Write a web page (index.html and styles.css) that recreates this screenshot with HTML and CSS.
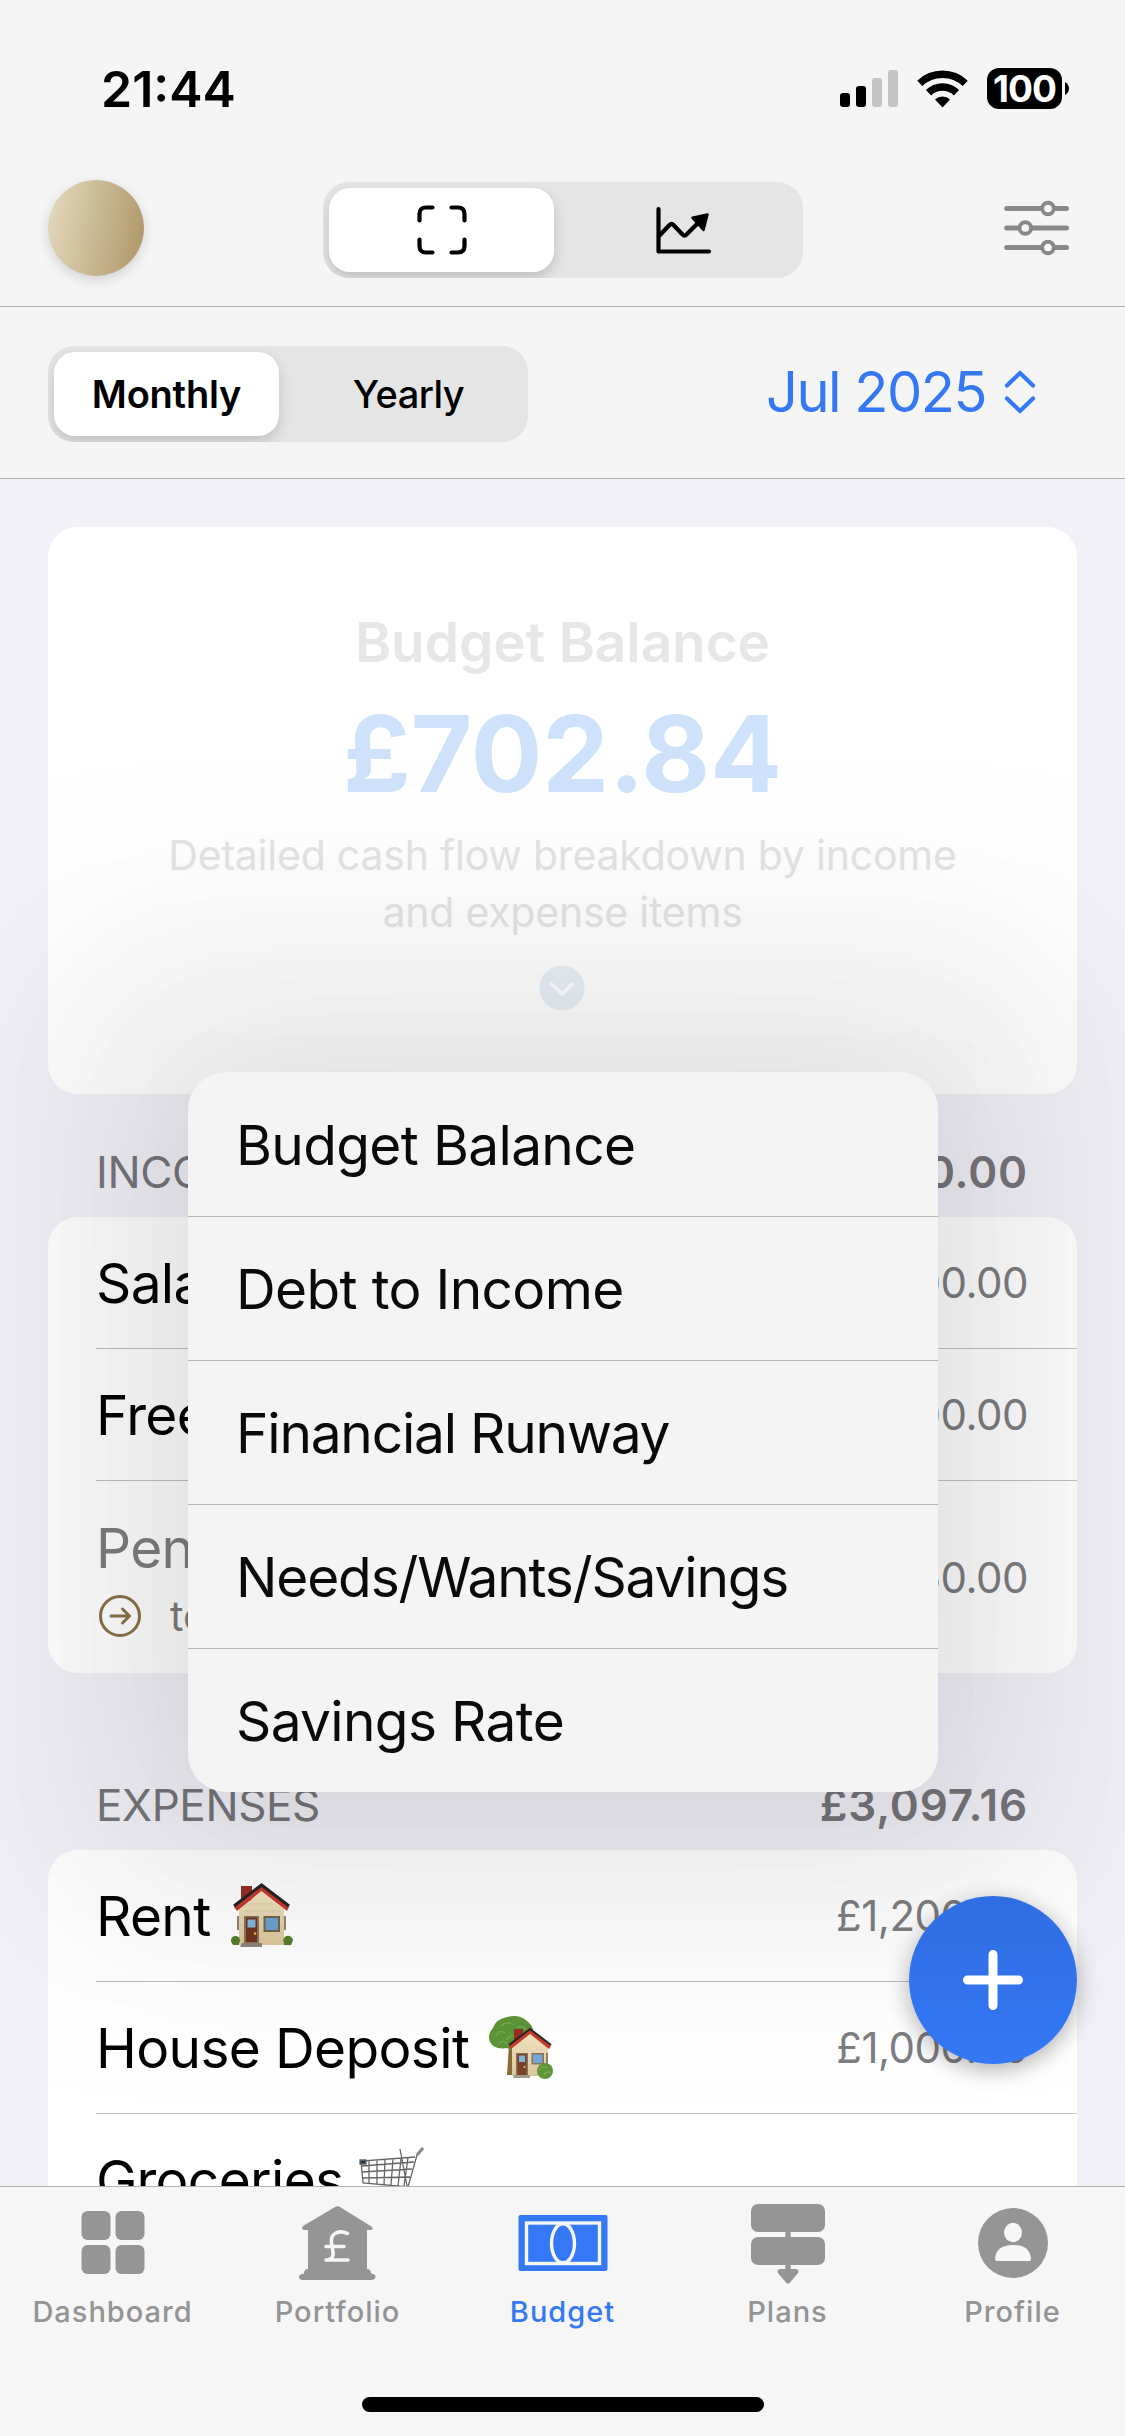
FILE: index.html
```html
<!DOCTYPE html>
<html lang="en">
<head>
<meta charset="utf-8">
<title>Budget</title>
<link rel="stylesheet" href="styles.css">
</head>
<body>
<div class="phone">
  <header class="top">
    <div class="status">
      <span class="clock">21:44</span>
      <div class="status-icons">
        <svg class="signal" width="58" height="38" viewBox="0 0 58 38"><rect x="0" y="23" width="10" height="14" rx="3"/><rect x="16" y="16" width="10" height="21" rx="3"/><g fill="#c4c4c4"><rect x="32" y="8" width="10" height="29" rx="3"/><rect x="48" y="0" width="10" height="37" rx="3"/></g></svg>
        <svg class="wifi" width="51" height="38" viewBox="0 0 51 38"><g fill="none" stroke="#000" stroke-width="7.5"><path d="M2.8 13.4 A33 33 0 0 1 48.200 13.400"/><path d="M11.500 22.800 A20 20 0 0 1 39.500 22.800"/></g><path d="M18 29.500 A11 11 0 0 1 33 29.500 L25.500 37.500 Z"/></svg>
        <div class="battery"><span class="battery-body">100</span><svg width="4" height="13" viewBox="0 0 4 13"><path d="M0 0 Q4 2.500 4 6.500 T0 13Z"/></svg></div>
      </div>
    </div>
    <div class="toolbar">
      <div class="avatar"></div>
      <div class="segment">
        <div class="seg on"><svg width="50" height="50" viewBox="0 0 50 50" fill="none" stroke="#000" stroke-width="4.200" stroke-linecap="round"><path d="M2.500 15.500V9Q2.500 2.500 9 2.500H15.500M34.500 2.500H41Q47.500 2.500 47.500 9V15.500M47.500 34.500V41Q47.500 47.500 41 47.500H34.500M15.500 47.500H9Q2.500 47.500 2.500 41V34.500"/></svg></div>
        <div class="seg"><svg class="trend" width="58" height="48" viewBox="0 0 58 48" fill="none" stroke="#000" stroke-width="4.200" stroke-linecap="round" stroke-linejoin="round"><path d="M2.500 3V45.500H53"/><path d="M3 30L13.500 19Q15.500 17 17.500 19L26.500 28.500Q28.500 31 30.500 28.500L43 16"/><path d="M36.500 11.800L51.500 8.500L47.500 24Z" fill="#000" stroke-width="2.500"/></svg></div>
      </div>
      <svg class="sliders" width="66" height="56" viewBox="0 0 66 56" fill="none" stroke="#888" stroke-width="5" stroke-linecap="round"><path d="M2.700 8.500H37M51 8.500H62.500M2.700 28H14M28 28H62.500M2.700 47.500H37M51 47.500H62.500"/><g stroke-width="3.900"><circle cx="44" cy="8.500" r="5.800"/><circle cx="21.300" cy="28" r="5.800"/><circle cx="44" cy="47.500" r="5.800"/></g></svg>
    </div>
    <div class="period">
      <div class="segment">
        <div class="seg on label">Monthly</div>
        <div class="seg label yearly">Yearly</div>
      </div>
      <div class="month"><span>Jul 2025</span><svg width="32" height="44" viewBox="0 0 32 44" fill="none" stroke="#3478f6" stroke-width="4.200" stroke-linecap="round" stroke-linejoin="round"><path d="M3 15.500L16 3L29 15.500M3 28.500L16 41L29 28.500"/></svg></div>
    </div>
  </header>

  <main class="content">
    <section class="card summary">
      <div class="faded">
        <h1>Budget Balance</h1>
        <div class="total">£702.84</div>
        <p>Detailed cash flow breakdown by income<br>and expense items</p>
        <svg class="more" width="46" height="46" viewBox="0 0 46 46"><circle cx="23" cy="23" r="22.500" fill="#e9f0f8"/><path d="M12.500 19L23 29L33.500 19" fill="none" stroke="#fff" stroke-width="3.500" stroke-linecap="round" stroke-linejoin="round"/></svg>
      </div>
    </section>

    <div class="section-head income"><span>INCOME</span><b>£3,800.00</b></div>
    <section class="card list">
      <div class="row"><span class="name">Salary</span><span class="amount">£3,000.00</span></div>
      <div class="row"><span class="name">Freela</span><span class="amount">£500.00</span></div>
      <div class="row tall">
        <div><div class="name muted">Pens</div>
        <div class="dest"><svg width="44" height="44" viewBox="0 0 44 44" fill="none" stroke="#8a734a" stroke-width="3" stroke-linecap="round" stroke-linejoin="round"><circle cx="22" cy="22" r="19.500"/><path d="M13 22H31M24.500 15L31.500 22L24.500 29"/></svg><span>to</span></div></div>
        <span class="amount">£350.00</span>
      </div>
    </section>

    <div class="section-head expenses"><span>EXPENSES</span><b>£3,097.16</b></div>
    <section class="card list">
      <div class="row"><span class="name">Rent</span>
        <svg class="emoji rent" width="62" height="62" viewBox="0 0 62 62"><defs><linearGradient id="wall" x2="0" y2="1"><stop stop-color="#f1e5c4"/><stop offset="1" stop-color="#dcc79c"/></linearGradient></defs><path d="M10 1H21V16H10Z" fill="#982f25"/><path d="M8 24L31 6L53 24V60H8Z" fill="url(#wall)"/><path d="M9 33H53M9 40H53M9 47H53M9 54H53M18 19H44M13 26H50" stroke="#d5c59f" stroke-width=".7"/><path d="M3 22L30.500 0L58 22L56 26L30.500 6L6 26Z" fill="#c63a2d"/><path d="M3 21L30.500 0L58 21" fill="none" stroke="#252525" stroke-width="3"/><path d="M13 31H28V58H13Z" fill="#8b7355"/><path d="M15 32.500H26V57H15Z" fill="#70341f"/><path d="M16.500 34.500H24.500V42.500H16.500Z" fill="#83b5dc"/><circle cx="24" cy="48.500" r="1.300" fill="#f2c34b"/><path d="M32.500 31H49V47H32.500Z" fill="#776246"/><path d="M34.500 33H47V45H34.500Z" fill="#6ca3d2"/><path d="M7 31V45M54 31V45" stroke="#756653" stroke-width="1.600"/><circle cx="4.500" cy="55.500" r="4.500" fill="#557e2c"/><circle cx="57" cy="55.500" r="4.700" fill="#557e2c"/><path d="M0 55H8V60H2ZM53 54H62L60 60H53Z" fill="#557e2c"/><path d="M11 58H31V62H9Z" fill="#8d8779"/></svg>
        <span class="amount">£1,200.00</span></div>
      <div class="row"><span class="name">House Deposit</span>
        <svg class="emoji deposit" width="64" height="64" viewBox="0 0 64 64"><path d="M20 29H31L28 59H18Z" fill="#8b6b36"/><path d="M1 26Q-2 18 4 12Q7 3 18 1Q30-2 38 5Q45 10 44 18L31 30Q26 36 18 32Q5 34 1 26Z" fill="#5d9538"/><path d="M7 20Q10 13 16 17M12 10Q19 4 24 9M17 24Q23 17 28 22M28 11Q34 9 37 14M10 28Q14 23 18 28" fill="none" stroke="#74a848" stroke-width="1.500"/><path d="M25 13H34V27H25Z" fill="#982f25"/><path d="M23 31L41 16L59 31V60H23Z" fill="url(#wall)"/><path d="M19.500 30L41 13L62 30L60 33L41 18L22 33Z" fill="#c63a2d"/><path d="M20 29L41 13L62 29" fill="none" stroke="#252525" stroke-width="2"/><path d="M27 37H39V60H27Z" fill="#8b7355"/><path d="M28.500 38H37.500V59H28.500Z" fill="#79402a"/><path d="M30 39.500H36V46H30Z" fill="#83b5dc"/><path d="M42.500 37H55V48.500H42.500Z" fill="#8b7355"/><path d="M44 38.500H53.500V47H44Z" fill="#72a9d8"/><circle cx="35.500" cy="51" r="1" fill="#f2c34b"/><path d="M58 37V48" stroke="#756653" stroke-width="1.500"/><circle cx="56" cy="55" r="8" fill="#61953a"/><path d="M50 55Q53 48 58 52M55 59Q58 54 62 57" fill="none" stroke="#76a84a" stroke-width="1.500"/><path d="M25 59H41V62H24Z" fill="#a39c8e"/></svg>
        <span class="amount">£1,000.00</span></div>
      <div class="row"><span class="name">Groceries</span>
        <svg class="emoji cart" width="64" height="64" viewBox="0 0 64 64" fill="none" stroke="#656567" stroke-width="1.300"><path d="M63 0L57 7L48 39L3 35L1 13L55 9M2 18L54 14M2 24L52 21M3 30L50 29M9 13V36M17 12V37M25 12L24 37M33 11L31 37M41 11L38 38M48 10L44 38M40 1L47 38"/><path d="M48 39L45 51H7" stroke-width="2"/><path d="M63 0L57 7" stroke-width="3" stroke="#888"/><path d="M0 12H6V16H0Z" fill="#24394b"/><circle cx="12" cy="57" r="4"/><circle cx="42" cy="57" r="4"/></svg></div>
    </section>
  </main>

  <div class="menu" role="menu">
    <div class="item">Budget Balance</div>
    <div class="item">Debt to Income</div>
    <div class="item runway">Financial Runway</div>
    <div class="item needs">Needs/Wants/Savings</div>
    <div class="item">Savings Rate</div>
  </div>

  <button class="fab" aria-label="Add"><svg width="60" height="60" viewBox="0 0 60 60"><path d="M30 4.500V55.500M4.500 30H55.500" stroke="#fff" stroke-width="9" stroke-linecap="round"/></svg></button>

  <nav class="tabs">
    <div class="tab"><svg width="80" height="84" viewBox="0 0 80 84" fill="#959595"><rect x="8.500" y="13" width="29" height="29" rx="6"/><rect x="42.500" y="13" width="29" height="29" rx="6"/><rect x="8.500" y="47" width="29" height="29" rx="6"/><rect x="42.500" y="47" width="29" height="29" rx="6"/></svg><span>Dashboard</span></div>
    <div class="tab"><svg width="80" height="84" viewBox="0 0 80 84" fill="#959595"><path d="M37 9Q39.500 7.500 42 9L73.500 28.500Q76.500 32 72 32H69V71Q73 71 73 75.500Q78 76 77.500 79Q77 82 73 82H5Q1 82 1 79Q1 76 6 75.500Q6 71 10 71V32H7Q2.500 32 5 28Z"/><path d="M49.500 35.500C42 32 32 34 33.500 45L35 54Q36 62 28 62H50M28 48.500H46" fill="none" stroke="#f6f6f6" stroke-width="3.600" stroke-linecap="round" stroke-linejoin="round"/></svg><span>Portfolio</span></div>
    <div class="tab active"><svg width="90" height="84" viewBox="0 0 90 84"><rect x=".5" y="17" width="89" height="56" rx="2" fill="#3478f6"/><g fill="none" stroke="#f6f6f6" stroke-width="3.400"><rect x="8.500" y="25" width="73" height="40.500"/><ellipse cx="45" cy="45.300" rx="11.500" ry="19.500"/></g></svg><span>Budget</span></div>
    <div class="tab"><svg width="80" height="84" viewBox="0 0 80 84" fill="#959595"><rect x="3" y="6" width="74" height="28" rx="7"/><rect x="3" y="39" width="74" height="28" rx="7"/><path d="M37.300 30H42.700V72H37.300Z"/><path d="M32 71H48Q52 72 50 75L42 84.500Q40 87 38 84.500L30 75Q28 72 32 71Z"/></svg><span>Plans</span></div>
    <div class="tab"><svg width="80" height="84" viewBox="0 0 80 84"><circle cx="40" cy="45" r="35" fill="#959595"/><g fill="#f7f7f7"><ellipse cx="40" cy="34.500" rx="9" ry="9.700"/><path d="M22 61Q23 47 40 47T58 61Q58 63 56 63H24Q22 63 22 61Z"/></g></svg><span>Profile</span></div>
    <div class="home"></div>
  </nav>
</div>
</body>
</html>
```

FILE: styles.css
```css
* { box-sizing: border-box; }
body { margin: 0; font-family: Inter, "Liberation Sans", sans-serif; color: #000; }
svg { display: block; flex: none; overflow: visible; }
.phone { position: relative; width: 1125px; height: 2436px; overflow: hidden; display: flex; flex-direction: column; background: #f2f1f7; }

.top { position: relative; z-index: 3; flex: none; height: 479px; background: #f5f5f5; border-bottom: 1px solid #b2b2b2; }
.status { height: 180px; padding: 67px 56px 0 101px; display: flex; justify-content: space-between; align-items: flex-start; }
.clock { font-size: 50px; line-height: 44px; font-weight: 600; letter-spacing: 0; }
.status-icons { display: flex; align-items: flex-start; }
.signal { margin: 3px 19px 0 0; }
.wifi { margin: 3px 19px 0 0; }
.battery { display: flex; align-items: center; gap: 3px; }
.battery-body { width: 75px; height: 41px; margin-top: 1px; border-radius: 12px; background: #000; color: #fff; font-size: 37px; font-weight: 700; line-height: 41px; text-align: center; letter-spacing: -1px; }
.toolbar { height: 127px; padding: 0 55px 0 48px; display: flex; align-items: flex-start; border-bottom: 1px solid #b2b2b2; }
.avatar { width: 96px; height: 96px; border-radius: 50%; background: linear-gradient(100deg, #e0d6b9 8%, #b2986b 95%); box-shadow: 0 4px 12px rgba(0,0,0,.14); }
.segment { width: 480px; height: 96px; padding: 6px; display: flex; border-radius: 26px; background: #e5e5e5; overflow: hidden; }
.toolbar .segment { margin: 2px auto 0 179px; }
.seg { width: 225px; height: 84px; display: flex; align-items: center; justify-content: center; }
.seg + .seg { margin-left: 18px; }
.seg.on { border-radius: 21px; background: #fff; box-shadow: 0 6px 14px rgba(0,0,0,.16); }
.label { font-size: 38px; font-weight: 600; letter-spacing: -.2px; }
.yearly { font-weight: 500; letter-spacing: -.5px; padding-right: 2px; }
.sliders { margin-top: 20px; }
.period { height: 171px; padding: 39px 89px 0 48px; display: flex; justify-content: space-between; }
.month { height: 92px; display: flex; align-items: center; gap: 18px; color: #3478f6; font-size: 56px; letter-spacing: -1.500px; }

.content { flex: none; padding: 48px 48px 0; }
.card { border-radius: 30px; background: #fff; }
.summary { height: 567px; padding-top: 82px; }
.faded { display: flex; flex-direction: column; align-items: center; text-align: center; }
h1 { margin: 0; font-size: 55px; line-height: 66px; font-weight: 600; letter-spacing: -.1px; color: #e7e7e7; }
.total { font-size: 106px; line-height: 126px; margin-top: 16px; font-weight: 700; letter-spacing: 0; color: #cfe2fc; }
p { margin: 10px 0 0; font-size: 41px; line-height: 57px; letter-spacing: -.22px; color: #e4e4e5; }
.more { margin: 24px 1px 0 0; }
.section-head { display: flex; justify-content: space-between; align-items: flex-end; padding: 0 49px 0 48px; font-size: 44px; line-height: 54px; letter-spacing: -.4px; color: #76767b; }
.section-head b { font-weight: 600; letter-spacing: .85px; }
.income { height: 123px; padding-bottom: 18px; }
.expenses { height: 177px; padding-bottom: 18px; }
.list { overflow: hidden; }
.row { height: 132px; margin-left: 48px; padding-right: 49px; display: flex; align-items: center; border-bottom: 1px solid #c0c0c2; }
.name { font-size: 55px; line-height: 66px; letter-spacing: -.65px; }
.amount { margin-left: auto; font-size: 42px; line-height: 52px; padding-top: 1px; letter-spacing: -.5px; color: #7e7e82; }
.tall { height: 192px; padding-top: 1px; border-bottom: 0; }
.muted { color: #7e7e82; }
.dest { display: flex; align-items: center; gap: 28px; padding-left: 2px; font-size: 41px; line-height: 56px; margin: 7px 0 -3px; color: #7e7e82; }
.emoji { margin-left: 20px; }
.cart { margin-left: 17px; }

/* The menu's ambient shadow is built from stacked layers, which fall off more gently than one blur. */
.menu { position: absolute; z-index: 2; left: 188px; top: 1072px; width: 750px; height: 720px; border-radius: 38px; background: #f4f4f4;
  box-shadow: 0 0 170px -240px rgba(8,8,0,.016), 0 0 170px -120px rgba(8,8,0,.046), 0 0 170px 0 rgba(8,8,0,.068), 0 0 170px 120px rgba(8,8,0,.05), 0 0 170px 240px rgba(8,8,0,.02); }
.item { height: 144px; padding: 1px 0 0 48px; display: flex; align-items: center; font-size: 55px; letter-spacing: -.65px; color: #0a0a0a; }
.item + .item { border-top: 1px solid #b4b4b4; }
.item.runway { letter-spacing: -1.200px; }
.item.needs { letter-spacing: -1.150px; }

.fab { position: absolute; z-index: 2; left: 909px; top: 1896px; width: 168px; height: 168px; padding: 0; border: 0; border-radius: 50%; display: grid; place-items: center; background: linear-gradient(#2f6de2, #3478f6); box-shadow: 0 6px 22px rgba(0,0,0,.3); }

.tabs { position: absolute; z-index: 3; left: 0; bottom: 0; width: 1125px; height: 250px; display: grid; grid-template-columns: repeat(5, 225px); grid-template-rows: 210px 15px; background: #f6f6f6; border-top: 1px solid #b2b2b2; }
.tab { padding: 11px 0 0; display: flex; flex-direction: column; align-items: center; color: #949494; font-size: 29px; font-weight: 500; letter-spacing: 1px; }
.tab span { margin-top: 12px; line-height: 36px; }
.active { color: #3478f6; }
.home { grid-column: 1 / -1; justify-self: center; width: 402px; height: 15px; border-radius: 8px; background: #000; }
```
